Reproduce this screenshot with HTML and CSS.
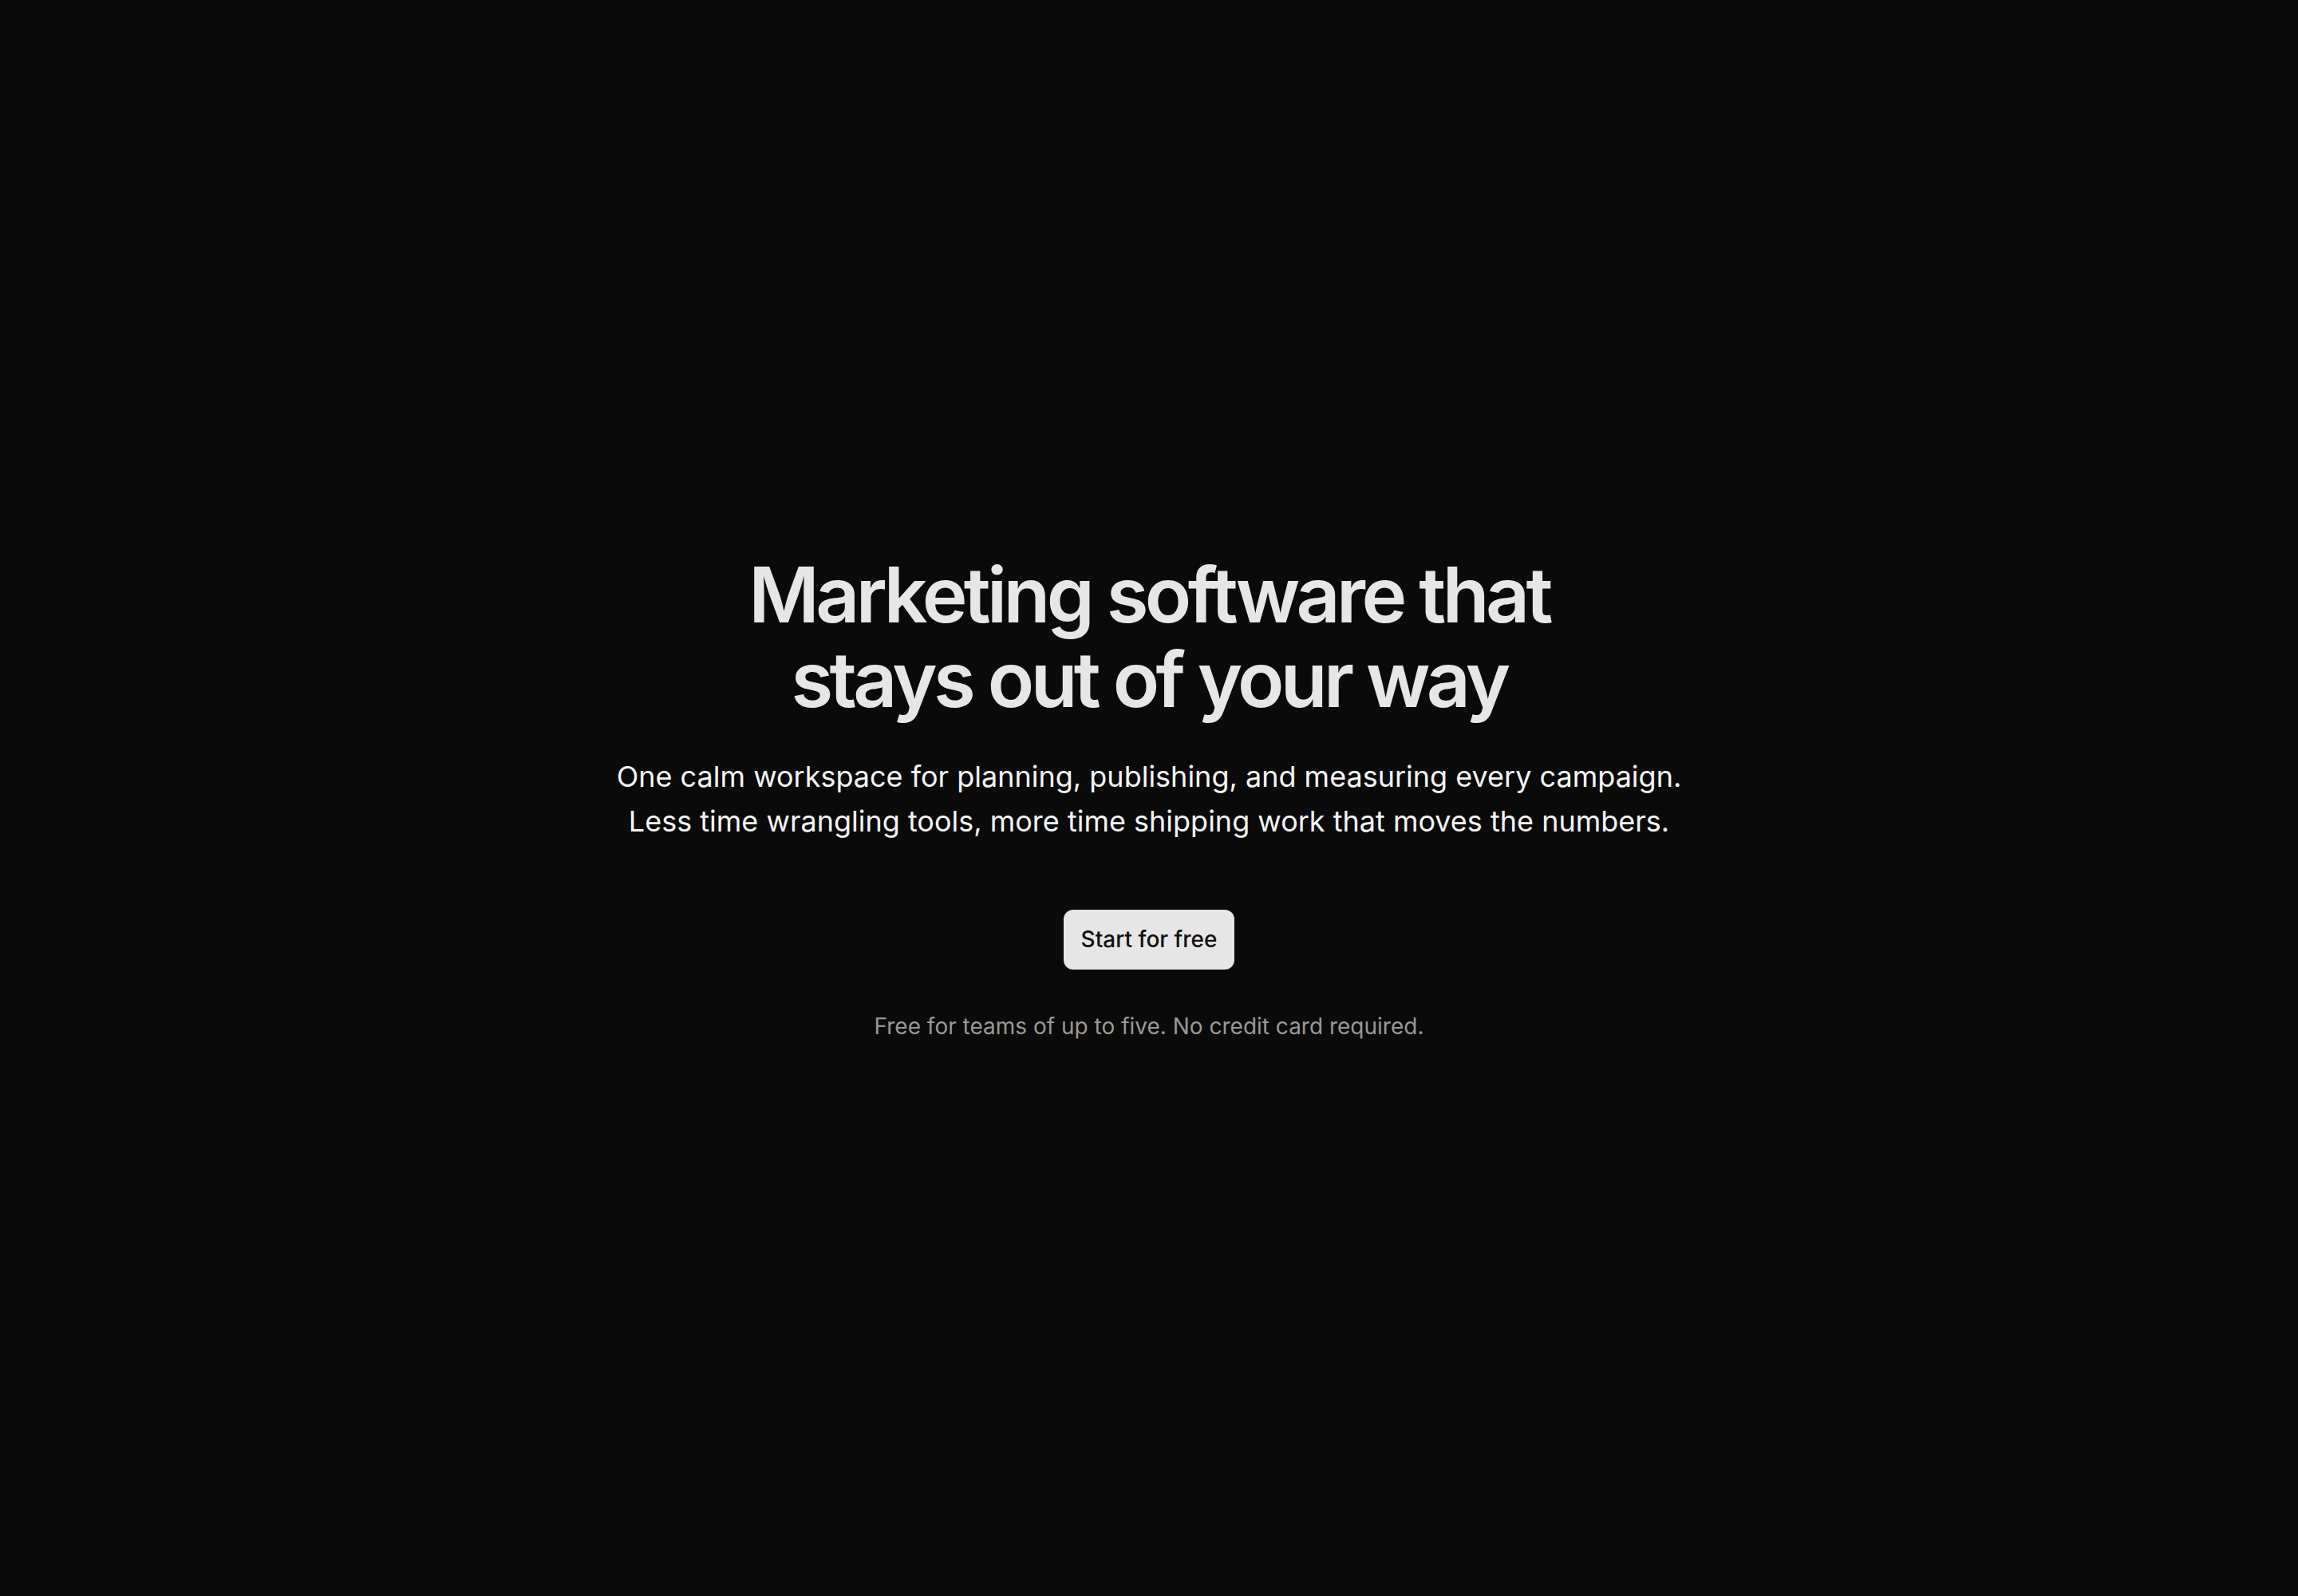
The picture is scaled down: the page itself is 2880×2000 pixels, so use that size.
FILE: index.html
```html
<!DOCTYPE html>
<html lang="en">
<head>
<meta charset="utf-8">
<title>Marketing software that stays out of your way</title>
<link rel="stylesheet" href="styles.css">
</head>
<body>
<main class="hero">
  <h1 class="hero-title">Marketing software that<br>stays out of your way</h1>
  <p class="hero-sub">One calm workspace for planning, publishing, and measuring every campaign.<br>Less time wrangling tools, more time shipping work that moves the numbers.</p>
  <a class="hero-cta" href="#">Start for free</a>
  <p class="hero-note">Free for teams of up to five. No credit card required.</p>
</main>
</body>
</html>
```

FILE: styles.css
```css
* { box-sizing: border-box; }
html, body {
  margin: 0;
  padding: 0;
  background: #0a0a0a;
}
body {
  font-family: Inter, "Noto Sans", "Liberation Sans", sans-serif;
  color: #f5f5f5;
}
.hero {
  min-height: 100vh;
  display: flex;
  flex-direction: column;
  align-items: center;
  justify-content: center;
  text-align: center;
}
.hero-title {
  margin: 0;
  font-size: 96px;
  line-height: 1.1;
  font-weight: 600;
  letter-spacing: -0.048em;
  color: #e6e6e6;
}
.hero-sub {
  margin: 42px 0 0;
  font-size: 36px;
  line-height: 1.55;
  font-weight: 400;
  color: #f5f5f5;
}
.hero-cta {
  margin-top: 82px;
  display: inline-flex;
  align-items: center;
  justify-content: center;
  height: 75px;
  padding: 0 22px;
  border-radius: 12px;
  background: #e6e6e6;
  color: #111111;
  font-size: 28px;
  font-weight: 500;
  text-decoration: none;
}
.hero-note {
  margin: 50px 0 0;
  font-size: 28px;
  line-height: 1.5;
  color: #999999;
}
```
